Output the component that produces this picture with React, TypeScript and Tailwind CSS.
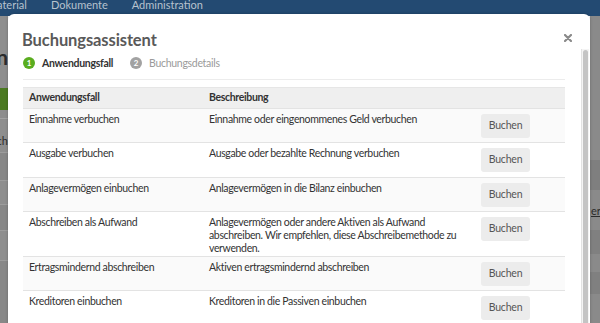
import React from 'react'

type Row = {
  title: string
  text: string
}

const rows: Row[] = [
  { title: 'Einnahme verbuchen', text: 'Einnahme oder eingenommenes Geld verbuchen' },
  { title: 'Ausgabe verbuchen', text: 'Ausgabe oder bezahlte Rechnung verbuchen' },
  { title: 'Anlagevermögen einbuchen', text: 'Anlagevermögen in die Bilanz einbuchen' },
  {
    title: 'Abschreiben als Aufwand',
    text: 'Anlagevermögen oder andere Aktiven als Aufwand abschreiben. Wir empfehlen, diese Abschreibemethode zu verwenden.',
  },
  { title: 'Ertragsmindernd abschreiben', text: 'Aktiven ertragsmindernd abschreiben' },
  { title: 'Kreditoren einbuchen', text: 'Kreditoren in die Passiven einbuchen' },
]

function Backdrop() {
  return (
    <div className="flex h-full flex-col">
      {/* top navigation (dimmed) */}
      <div className="flex h-[16px] shrink-0 items-start overflow-hidden bg-[#234a72]">
        <div className="-ml-[13px] -mt-[4px] flex gap-[24px] text-[11px] leading-[17px] text-[#b7c2ce]">
          <span>Material</span>
          <span>Dokumente</span>
          <span>Administration</span>
        </div>
      </div>

      <div className="flex flex-1 justify-between">
        {/* left strip */}
        <div className="flex w-[8px] flex-col overflow-hidden bg-[#8e8e8e]">
          <div className="flex h-[72px] items-center justify-end pt-[8px]">
            <span className="text-[21px] font-bold leading-none text-[#2b2b2b]">n</span>
          </div>
          <div className="h-[22px] bg-[#4b7a21]" />
          <div className="h-[8px]" />
          <div className="flex h-[34px] items-end justify-end border-t border-[#a3a3a3] pb-[6px]">
            <span className="text-[11px] leading-none text-[#2b2b2b]">ch</span>
          </div>
          <div className="h-[28px] border-t border-[#9c9c9c] bg-[#878787]" />
          <div className="h-[24px] border-t border-[#9c9c9c]" />
          <div className="h-[26px] border-t border-[#9c9c9c] bg-[#878787]" />
          <div className="h-[30px] border-t border-[#9c9c9c]" />
          <div className="flex-1 border-t border-[#9c9c9c] bg-[#888888]" />
        </div>

        {/* right strip */}
        <div className="flex w-[10px] flex-col overflow-hidden bg-[#8a8a8a]">
          <div className="h-[144px]" />
          <div className="h-[30px] bg-[#7f7f7f]" />
          <div className="flex h-[40px] items-center pl-[1px]">
            <span className="text-[11px] leading-none text-[#2b2b2b] underline">era</span>
          </div>
          <div className="h-[24px] bg-[#808080]" />
          <div className="h-[18px]" />
          <div className="h-[22px] bg-[#808080]" />
          <div className="flex-1" />
        </div>
      </div>
    </div>
  )
}

function Step({ n, label, active }: { n: number; label: string; active?: boolean }) {
  return (
    <div className="flex items-center gap-[7px]">
      <span
        className={`flex h-[12px] w-[12px] items-center justify-center rounded-full text-[8px] font-bold leading-none text-white ${
          active ? 'bg-[#5aad1f]' : 'bg-[#a2a2a2]'
        }`}
      >
        {n}
      </span>
      <span
        className={`text-[10.5px] leading-[12px] tracking-[-0.3px] ${
          active ? 'font-bold text-[#333333]' : 'text-[#9a9a9a]'
        }`}
      >
        {label}
      </span>
    </div>
  )
}

export default function App() {
  return (
    <div className="relative h-[323px] w-[600px] overflow-hidden font-['Lato',sans-serif]">
      <Backdrop />

      {/* --- MODAL --- */}
      <div className="absolute left-[8px] top-[14px] h-[330px] w-[582px] rounded-t-[6px] bg-white shadow-[0_0_3px_rgba(0,0,0,0.25)]">
        <button className="absolute right-[18px] top-[20px] text-[#8a8a8a]">
          <svg width="8" height="8" viewBox="0 0 8 8">
            <path d="M1 1 L7 7 M7 1 L1 7" stroke="currentColor" strokeWidth="2.2" strokeLinecap="round" />
          </svg>
        </button>

        {/* scrollbar */}
        <div className="absolute bottom-0 right-[1px] top-[35px] w-[8px] border-l border-[#e2e2e2] bg-[#f4f4f4] px-[1px]">
          <div className="mt-[1px] h-full rounded-full bg-[#c4c4c4]" />
        </div>

        <div className="pl-[15px] pr-[25px] pt-[16px]">
          <h1 className="-ml-[1px] text-[16.5px] font-bold leading-[20px] tracking-[-0.1px] text-[#595959]">
            Buchungsassistent
          </h1>

          <div className="mt-[7px] flex gap-[17px]">
            <Step n={1} label="Anwendungsfall" active />
            <Step n={2} label="Buchungsdetails" />
          </div>

          <div className="mt-[10px] border-t border-[#ececec]" />

          <table className="mt-[7px] w-full table-fixed border-collapse text-[10.5px] tracking-[-0.35px] text-[#333333]">
            <colgroup>
              <col className="w-[180px]" />
              <col className="w-[272px]" />
              <col />
            </colgroup>
            <thead>
              <tr className="h-[21px] border-t border-[#e6e6e6] bg-[#efefef]">
                <th className="px-[6px] text-left font-bold">Anwendungsfall</th>
                <th className="px-[6px] text-left font-bold">Beschreibung</th>
                <th />
              </tr>
            </thead>
            <tbody>
              {rows.map((r, i) => (
                <tr key={r.title} className={`border-t border-[#e3e3e3] ${i % 2 === 0 ? 'bg-[#fafafa]' : 'bg-white'}`}>
                  <td className="px-[6px] pb-[1px] pt-[4px] align-top leading-[13px]">{r.title}</td>
                  <td className="px-[6px] pb-[1px] pt-[4px] align-top leading-[13px]">{r.text}</td>
                  <td className={`px-[6px] pt-[5px] align-top ${i === 1 ? 'pb-[5px]' : 'pb-[4px]'}`}>
                    <button className="h-[24px] w-[49px] rounded-[3px] bg-[#ececec] text-[10.5px] tracking-[-0.2px] text-[#555555]">
                      Buchen
                    </button>
                  </td>
                </tr>
              ))}
            </tbody>
          </table>
        </div>
      </div>
    </div>
  )
}
